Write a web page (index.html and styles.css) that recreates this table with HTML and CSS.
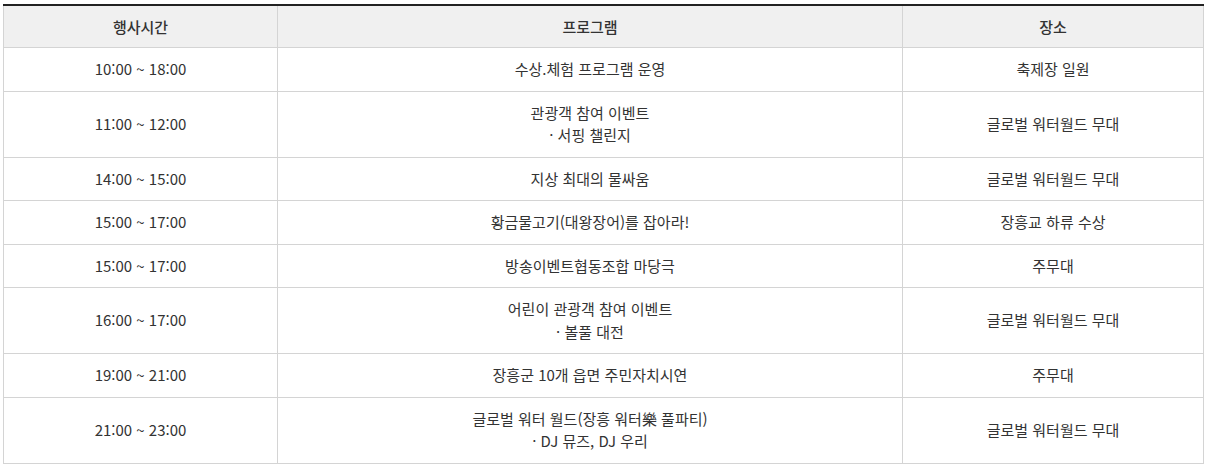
FILE: index.html
```html
<!DOCTYPE html>
<html lang="ko">
<head>
<meta charset="utf-8">
<link rel="stylesheet" href="styles.css">
</head>
<body>
<table class="schedule">
  <colgroup>
    <col class="c-time">
    <col class="c-prog">
    <col class="c-place">
  </colgroup>
  <thead>
    <tr><th>행사시간</th><th>프로그램</th><th>장소</th></tr>
  </thead>
  <tbody>
    <tr><td>10:00 ~ 18:00</td><td>수상.체험 프로그램 운영</td><td>축제장 일원</td></tr>
    <tr><td>11:00 ~ 12:00</td><td>관광객 참여 이벤트<br>· 서핑 챌린지</td><td>글로벌 워터월드 무대</td></tr>
    <tr><td>14:00 ~ 15:00</td><td>지상 최대의 물싸움</td><td>글로벌 워터월드 무대</td></tr>
    <tr><td>15:00 ~ 17:00</td><td>황금물고기(대왕장어)를 잡아라!</td><td>장흥교 하류 수상</td></tr>
    <tr><td>15:00 ~ 17:00</td><td>방송이벤트협동조합 마당극</td><td>주무대</td></tr>
    <tr><td>16:00 ~ 17:00</td><td>어린이 관광객 참여 이벤트<br>· 볼풀 대전</td><td>글로벌 워터월드 무대</td></tr>
    <tr><td>19:00 ~ 21:00</td><td>장흥군 10개 읍면 주민자치시연</td><td>주무대</td></tr>
    <tr><td>21:00 ~ 23:00</td><td>글로벌 워터 월드(장흥 워터樂 풀파티)<br>· DJ 뮤즈, DJ 우리</td><td>글로벌 워터월드 무대</td></tr>
  </tbody>
</table>
</body>
</html>
```

FILE: styles.css
```css
html, body {
  margin: 0;
  padding: 0;
  background: #fff;
}
body {
  padding: 4px 0 0 3px;
  font-family: "Noto Sans CJK KR", "Noto Sans", sans-serif;
  font-size: 15px;
  color: #333;
  font-feature-settings: "calt" 0;
}
.schedule {
  width: 1200px;
  border-collapse: collapse;
  table-layout: fixed;
}
.c-time { width: 274px; }
.c-prog { width: 625px; }
.c-place { width: 301px; }
.schedule th,
.schedule td {
  border: 1px solid #d4d4d4;
  text-align: center;
  vertical-align: middle;
  line-height: 22.5px;
  padding: 10px 8px;
  font-weight: 400;
}
.schedule thead th {
  border-top: 2px solid #222;
  padding: 9.5px 8px 9px;
  background: #f0f0f0;
  font-weight: 500;
  color: #333;
}
```
